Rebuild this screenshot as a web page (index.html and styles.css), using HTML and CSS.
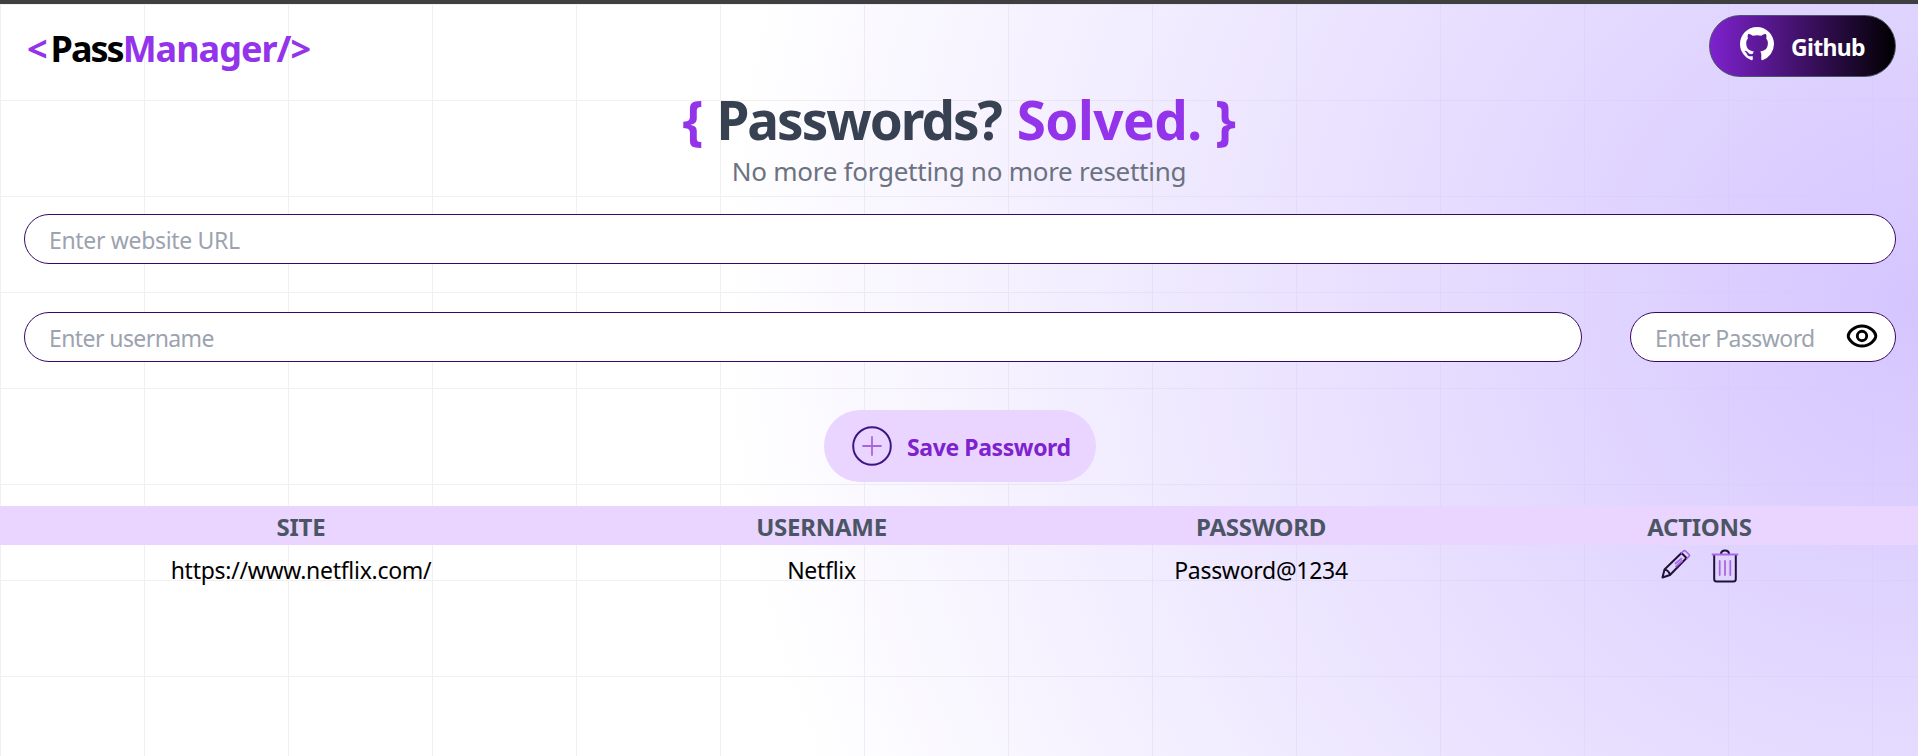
FILE: index.html
```html
<!DOCTYPE html>
<html lang="en">
<head>
<meta charset="utf-8">
<title>PassManager</title>
<link rel="stylesheet" href="styles.css">
</head>
<body>
<div class="page">
  <nav class="nav">
    <div class="logo"><span class="accent">&lt;</span><span class="logo-pass">Pass</span><span class="accent">Manager/&gt;</span></div>
    <button class="github">
      <svg width="34" height="34" viewBox="0 0 16 16" fill="#fff"><path d="M8 0C3.58 0 0 3.58 0 8c0 3.54 2.29 6.53 5.47 7.59.4.07.55-.17.55-.38 0-.19-.01-.82-.01-1.49-2.01.37-2.53-.49-2.69-.94-.09-.23-.48-.94-.82-1.13-.28-.15-.68-.52-.01-.53.63-.01 1.08.58 1.23.82.72 1.21 1.87.87 2.33.66.07-.52.28-.87.51-1.07-1.78-.2-3.64-.89-3.64-3.95 0-.87.31-1.59.82-2.15-.08-.2-.36-1.02.08-2.12 0 0 .67-.21 2.2.82.64-.18 1.32-.27 2-.27s1.36.09 2 .27c1.53-1.04 2.2-.82 2.2-.82.44 1.1.16 1.92.08 2.12.51.56.82 1.27.82 2.15 0 3.07-1.87 3.75-3.65 3.95.29.25.54.73.54 1.48 0 1.07-.01 1.93-.01 2.2 0 .21.15.46.55.38A8.01 8.01 0 0 0 16 8c0-4.42-3.58-8-8-8z"/></svg>
      <span class="github-label">Github</span>
    </button>
  </nav>
  <header class="hero">
    <h1 class="title"><span class="accent">{ </span><span class="title-main">Passwords? </span><span class="accent title-solved">Solved.</span><span class="accent"> }</span></h1>
    <p class="subtitle">No more forgetting no more resetting</p>
  </header>
  <form class="form">
    <div class="field"><span class="hint-url">Enter website URL</span></div>
    <div class="row">
      <div class="field"><span>Enter username</span></div>
      <div class="field field-password">
        <span>Enter Password</span>
        <svg class="eye" width="32" height="26" viewBox="0 0 32 26" fill="none" stroke="#000" stroke-width="2.9"><path d="M2.200 13C2.200 9.500 8 3 16 3s13.800 6.500 13.800 10S24 23 16 23 2.200 16.500 2.200 13z"/><circle cx="16" cy="13" r="4.700"/></svg>
      </div>
    </div>
    <button type="button" class="save">
      <svg width="40" height="40" viewBox="0 0 40 40" fill="none" stroke-linecap="round"><circle cx="20" cy="20" r="18.800" stroke="#3f1486" stroke-width="2"/><path d="M20 11v18M11 20h18" stroke="#a866dd" stroke-width="1.800"/></svg>
      <span class="save-label">Save Password</span>
    </button>
  </form>
  <div class="table">
    <div class="table-row table-head"><span>SITE</span><span>USERNAME</span><span>PASSWORD</span><span>ACTIONS</span></div>
    <div class="table-row table-data">
      <span>https://www.netflix.com/</span><span>Netflix</span><span>Password@1234</span>
      <span class="actions">
        <svg width="30" height="30" viewBox="0 0 30 30" fill="none" stroke-width="2" stroke-linejoin="round" stroke-linecap="round"><path d="M1.500 28.500 3.500 20.500 20.500 4l5 5L9 26zM3.500 20.500Q8 21.500 9 26" stroke="#1f1235"/><path d="m20.500 4 2-2q1-.9 2 0L28 5.500q.9.900 0 1.800L26 9.500M14.500 14.500l6-5M15 17.500l6-5.500" stroke="#aa66e8" stroke-width="1.700"/></svg>
        <svg width="28" height="34" viewBox="0 0 28 34" fill="none" stroke-width="2" stroke-linecap="round"><path d="M3.200 6v24q0 2.500 2.500 2.500h16.600q2.500 0 2.500-2.500V6M10 5q0-3.500 4-3.500T18 5" stroke="#1f1235"/><path d="M1.500 5.500h25M8.700 12v14M14 12v14M19.300 12v14" stroke="#aa66e8" stroke-width="1.800"/></svg>
      </span>
    </div>
  </div>
</div>
</body>
</html>
```
FILE: styles.css
```css
* { box-sizing: border-box; }
body {
  margin: 0;
  height: 756px;
  overflow: hidden;
  border-top: 4px solid #3f3e40;
  font-family: "Noto Sans", "Open Sans", sans-serif;
  font-size: 23px;
  color: #000;
}
.page {
  height: 752px;
  background:
    radial-gradient(circle 1200px at 100% 300px, #d5c5ff, transparent),
    linear-gradient(to right, #f0f0f0 1px, transparent 1px) 0 0 / 144px 96px,
    linear-gradient(to bottom, #f0f0f0 1px, transparent 1px) 0 0 / 144px 96px,
    #fff;
}
svg { display: block; flex: none; }
button { font: inherit; border: 0; }
.accent { color: #9333ea; }
.nav {
  display: flex;
  justify-content: space-between;
  align-items: flex-start;
  height: 84px;
  padding: 11px 22px 0 27px;
}
.logo {
  margin-top: 10px;
  font-size: 36px;
  font-weight: 700;
  line-height: 48px;
  letter-spacing: -1px;
}
.logo-pass { margin-left: 4px; letter-spacing: -2px; }
.github {
  display: flex;
  align-items: center;
  gap: 17px;
  width: 187px;
  height: 62px;
  padding: 0 0 4px 30px;
  border: 1px solid #4b5563;
  border-radius: 31px;
  background: linear-gradient(to right, #7e22ce, #000);
  color: #fff;
  font-weight: 700;
}
.github-label { padding-top: 5px; letter-spacing: -.7px; }
.hero { height: 126px; text-align: center; }
.title {
  margin: 0;
  padding-top: 1px;
  font-size: 53px;
  font-weight: 700;
  line-height: 62px;
  color: #374151;
  letter-spacing: -.4px;
}
.title-main { letter-spacing: -2px; }
.title-solved { margin-left: 4px; letter-spacing: -.5px; }
.subtitle {
  margin: 0;
  font-size: 26px;
  line-height: 40px;
  color: #6b7280;
  letter-spacing: -.26px;
}
.form {
  display: flex;
  flex-direction: column;
  align-items: center;
  gap: 48px;
  height: 292px;
  padding: 0 22px 0 24px;
}
.field {
  display: flex;
  flex: 1;
  align-items: center;
  justify-content: space-between;
  width: 100%;
  height: 50px;
  min-height: 50px;
  max-height: 50px;
  padding: 1px 17px 0 24px;
  border: 1px solid #3b0764;
  border-radius: 25px;
  background: #fff;
  color: #9ca3af;
  letter-spacing: -.58px;
}
.hint-url { letter-spacing: -.33px; }
.row { display: flex; gap: 48px; width: 100%; height: 50px; }
.field-password { flex: 0 0 266px; }
.eye { margin-top: -3px; }
.save {
  display: flex;
  align-items: center;
  gap: 15px;
  width: 272px;
  height: 72px;
  padding: 0 0 0 28px;
  border-radius: 36px;
  background: #e9d5ff;
  color: #7e22ce;
  font-weight: 700;
  letter-spacing: -.4px;
}
.save-label { padding-top: 2px; white-space: nowrap; }
.table-row {
  display: grid;
  grid-template-columns: 602px 439px 440px 1fr;
  text-align: center;
}
.table-head {
  height: 39px;
  font-size: 24px;
  line-height: 41px;
  background: #e9d5ff;
  color: #4b5563;
  font-weight: 700;
  letter-spacing: -.25px;
}
.table-data { height: 50px; line-height: 51px; letter-spacing: -.28px; }
.actions { display: flex; justify-content: center; gap: 20px; padding-top: 4px; }
```
